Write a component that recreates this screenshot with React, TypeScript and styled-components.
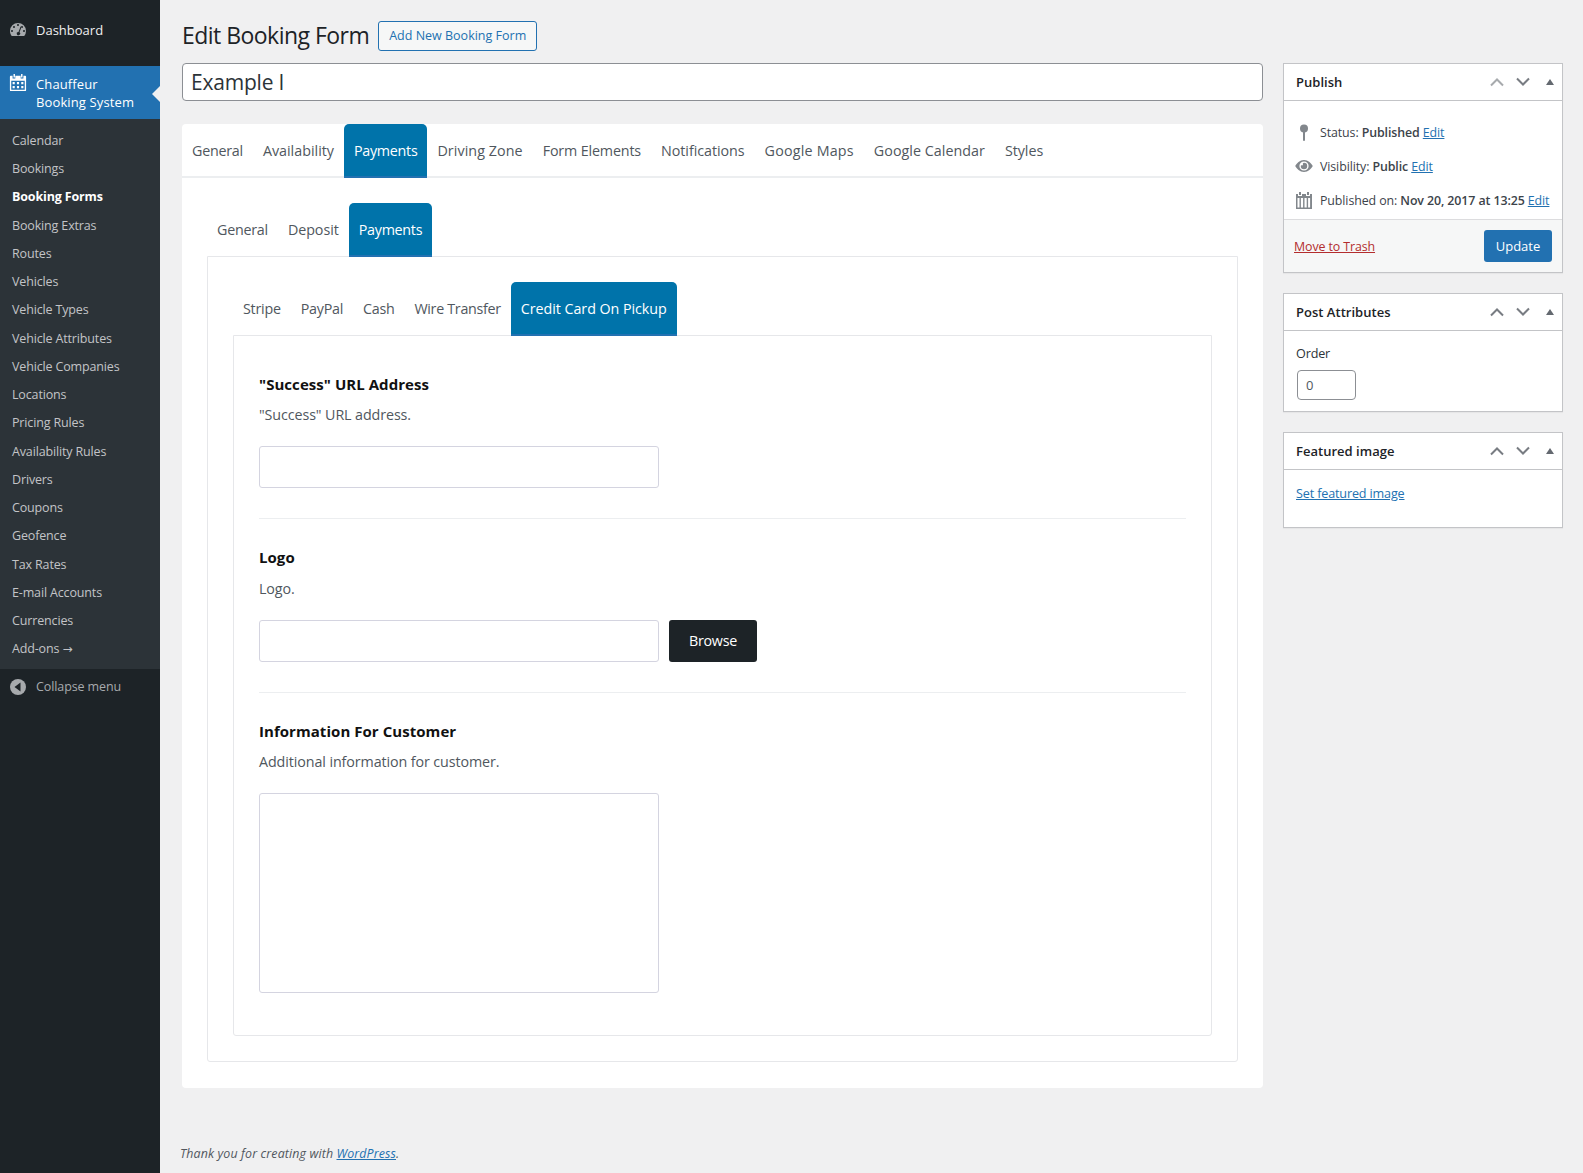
import React from "react";
import styled, { createGlobalStyle } from "styled-components";

const Global = createGlobalStyle`
  html, body { margin: 0; padding: 0; background: #f0f0f1; }
  body { font-family: "Open Sans", "Noto Sans", "Liberation Sans", sans-serif; font-size: 13px; color: #3c434a; }
  * { box-sizing: border-box; }
`;

const Page = styled.div`
  display: flex;
  height: 1173px;
  overflow: hidden;
  position: relative;
`;
const Side = styled.nav`
  width: 160px;
  flex: none;
  background: #1d2327;
  display: flex;
  flex-direction: column;
`;
const TopItem = styled.div`
  height: 66px;
  padding: 20px 0 0 8px;
  display: flex;
  gap: 8px;
  color: #f0f0f1;
  font-size: 13px;
  line-height: 20px;
  svg { flex: none; }
`;
const CurrentItem = styled.div`
  height: 53px;
  background: #2271b1;
  color: #fff;
  padding: 9px 0 0 9px;
  display: flex;
  gap: 9px;
  font-size: 13px;
  line-height: 18px;
  letter-spacing: 0.12px;
  position: relative;
  svg { flex: none; margin-top: -1px; }
  &::after {
    content: "";
    position: absolute;
    right: 0;
    top: 20px;
    border: 8px solid transparent;
    border-right-color: #f0f0f1;
    border-left-width: 0;
  }
`;
const SubMenu = styled.div`
  background: #2c3338;
  padding: 8px 0 6px;
`;
const SubItem = styled.div<{ $on?: boolean }>`
  height: 28.24px;
  padding-left: 12px;
  line-height: 28px;
  font-size: 12.5px;
  letter-spacing: -0.15px;
  color: ${(p) => (p.$on ? "#fff" : "#c3c4c7")};
  font-weight: ${(p) => (p.$on ? 700 : 400)};
  white-space: nowrap;
`;
const Arrow = styled.span`
  font-family: "DejaVu Sans", sans-serif;
  font-size: 12px;
  letter-spacing: 0;
`;
const Collapse = styled.div`
  display: flex;
  align-items: center;
  gap: 10px;
  padding: 9px 0 0 10px;
  color: #a7aaad;
  font-size: 12.5px;
  letter-spacing: -0.1px;
  line-height: 18px;
`;

const Main = styled.main`
  flex: 1;
  min-width: 0;
  padding: 0 20px 0 22px;
  position: relative;
`;
const Head = styled.div`
  display: flex;
  align-items: center;
  height: 63px;
  padding-top: 8px;
  gap: 9px;
`;
const H1 = styled.h1`
  margin: 0;
  font-size: 23px;
  font-weight: 400;
  color: #1d2327;
  letter-spacing: -0.53px;
  line-height: 29px;
`;
const AddNew = styled.a`
  border: 1px solid #2271b1;
  color: #2271b1;
  border-radius: 3px;
  font-size: 12.5px;
  height: 30px;
  line-height: 28px;
  padding: 0 10px;
  background: #f6f7f7;
`;
const Columns = styled.div`
  display: flex;
  gap: 20px;
  align-items: flex-start;
`;
const Left = styled.div`
  width: 1081px;
  flex: none;
`;
const Title = styled.div`
  height: 38px;
  border: 1px solid #8c8f94;
  border-radius: 4px;
  background: #fff;
  font-size: 21px;
  line-height: 37px;
  padding: 0 8px;
  color: #2c3338;
  letter-spacing: -0.2px;
`;
const Card = styled.section`
  margin-top: 23px;
  background: #fff;
  border-radius: 4px;
  height: 964px;
`;
const Tabs = styled.div`
  display: flex;
  height: 54px;
  border-bottom: 2px solid #eceef0;
`;
const Tab = styled.div<{ $on?: boolean; $track: number }>`
  height: 54px;
  padding: 0 10px;
  line-height: 53px;
  font-size: 14.3px;
  letter-spacing: ${(p) => p.$track}px;
  white-space: nowrap;
  color: ${(p) => (p.$on ? "#fff" : "#50575e")};
  background: ${(p) => (p.$on ? "#0073aa" : "transparent")};
  border-radius: ${(p) => (p.$on ? "5px 5px 0 0" : "0")};
  border-bottom: ${(p) => (p.$on ? "2px solid #2271b1" : "0")};
`;
const Level2 = styled.div`
  padding: 25px;
`;
const PlainTabs = styled(Tabs)`
  border-bottom: 0;
  margin-bottom: -1px;
  position: relative;
`;
const Panel = styled.div`
  border: 1px solid #e6e7ea;
  border-radius: 0 0 3px 3px;
  padding: 25px;
`;
const Inner = styled(Panel)`
  padding: 25px 25px 42px;
`;
const FieldTitle = styled.div`
  margin-top: 12.5px;
  font-size: 15px;
  font-weight: 700;
  line-height: 20px;
  letter-spacing: 0.05px;
  color: #111;
`;
const FieldDesc = styled.div`
  margin-top: 11.5px;
  font-size: 14.3px;
  line-height: 20px;
  letter-spacing: -0.1px;
  color: #50575e;
`;
const Row = styled.div`
  display: flex;
  gap: 10px;
  margin-top: 21px;
`;
const TextBox = styled.div<{ $tall?: boolean }>`
  width: 400px;
  height: ${(p) => (p.$tall ? "200px" : "42px")};
  border: 1px solid #d4d4e0;
  border-radius: 3px;
  background: #fff;
`;
const Browse = styled.button`
  height: 42px;
  width: 88px;
  border: 0;
  background: #1d2327;
  color: #fff;
  border-radius: 3px;
  font: inherit;
  font-size: 14.3px;
  letter-spacing: -0.3px;
`;
const Rule = styled.hr`
  border: 0;
  border-top: 1px solid #eceef0;
  margin: 30px 0 0;
`;
const RuleGap = styled.div`
  height: 15.5px;
`;
const Right = styled.aside`
  width: 280px;
  flex: none;
  display: flex;
  flex-direction: column;
  gap: 20px;
`;
const Box = styled.div`
  background: #fff;
  border: 1px solid #c3c4c7;
  box-shadow: 0 1px 1px rgba(0, 0, 0, 0.04);
`;
const BoxHead = styled.div`
  height: 37px;
  border-bottom: 1px solid #c3c4c7;
  display: flex;
  align-items: center;
  padding: 0 8.5px 0 12px;
  font-size: 13px;
  font-weight: 600;
  letter-spacing: 0.02px;
  color: #1d2327;
`;
const BoxTitle = styled.span`
  flex: 1;
`;
const Controls = styled.span`
  display: flex;
  gap: 10px;
  align-items: center;
  svg:last-child { margin-left: 4.5px; }
`;
const Meta = styled.div`
  padding: 14px 11px 0 11px;
`;
const MetaRow = styled.div`
  display: flex;
  align-items: center;
  height: 34px;
  font-size: 12.4px;
  letter-spacing: -0.1px;
  white-space: nowrap;
  gap: 7px;
  svg { flex: none; }
  b { font-weight: 600; }
`;
const MetaIcon = styled.span`
  width: 18px;
  height: 20px;
  display: flex;
  align-items: center;
  justify-content: center;
`;
const Lnk = styled.a`
  color: #2271b1;
  text-decoration: underline;
`;
const Major = styled.div`
  margin-top: 2px;
  height: 53px;
  border-top: 1px solid #dcdcde;
  background: #f6f7f7;
  display: flex;
  align-items: center;
  justify-content: space-between;
  padding: 0 10px;
  font-size: 12.4px;
  letter-spacing: -0.1px;
`;
const Trash = styled.a`
  color: #b32d2e;
  text-decoration: underline;
`;
const Update = styled.button`
  width: 68px;
  height: 32px;
  background: #2271b1;
  color: #fff;
  border: 0;
  border-radius: 3px;
  font: inherit;
  font-size: 13px;
`;
const BoxBody = styled.div<{ $h: number; $pt: number }>`
  height: ${(p) => p.$h}px;
  padding: ${(p) => p.$pt}px 12px 0;
  font-size: 12.6px;
  letter-spacing: -0.15px;
`;
const OrderLabel = styled.div`
  line-height: 20px;
  color: #2c3338;
`;
const OrderBox = styled.div`
  margin: 6px 0 0 1px;
  width: 59px;
  height: 30px;
  border: 1px solid #8c8f94;
  border-radius: 4px;
  padding: 0 8px;
  line-height: 28px;
  font-size: 13px;
  color: #50575e;
`;
const Foot = styled.div`
  position: absolute;
  left: 20px;
  top: 1144px;
  font-style: italic;
  font-size: 12.4px;
  letter-spacing: 0.13px;
  line-height: 20px;
  color: #50575e;
`;

const Gauge = () => (
  <svg width="20" height="20" viewBox="0 0 20 20" fill="#a7aaad">
    <path d="M3.76 16h12.48A7.97 7.97 0 0 0 18 11a8 8 0 0 0-16 0c0 1.9.66 3.64 1.76 5zM10 4a1 1 0 1 1 0 2 1 1 0 0 1 0-2zM6 6a1 1 0 1 1 0 2 1 1 0 0 1 0-2zm8 0a1 1 0 1 1 0 2 1 1 0 0 1 0-2zM4 10a1 1 0 1 1 0 2 1 1 0 0 1 0-2zm12 0a1 1 0 1 1 0 2 1 1 0 0 1 0-2zM12.6 6.6l.9.4L11.500 12.300a1.700 1.700 0 1 1-1-.4z" fillRule="evenodd" />
  </svg>
);
const Cal = ({ size = 18, color = "#fff" }: { size?: number; color?: string }) => (
  <svg width={size} height={size} viewBox="0 0 20 20" fill={color}>
    <path fillRule="evenodd" d="M5 0h1.6v4H5zM13.400 0H15v4h-1.600zM2 2h2v3h3V2h6v3h3V2h2a1 1 0 0 1 1 1v15a1 1 0 0 1-1 1H2a1 1 0 0 1-1-1V3a1 1 0 0 1 1-1zm.5 5.500v10h15v-10zM4 9h2.400v2.400H4zm4.800 0h2.400v2.400H8.800zm4.800 0H16v2.400h-2.400zM4 13.400h2.400v2.400H4zm4.800 0h2.400v2.400H8.800zm4.800 0H16v2.400h-2.400z" />
  </svg>
);
const PubCal = () => (
  <svg width="16" height="17" viewBox="0 0 16 17" fill="#82878c">
    <path fillRule="evenodd" d="M3 0h2v3H3zM11 0h2v3h-2zM0 2h2v2h4V2h4v2h4V2h2v15H0zm1.500 4v9.500h2V6zm3.400 0v9.500h2.200V6zm3.600 0v9.500h2.200V6zm3.600 0v9.500h2V6z" />
  </svg>
);
const Pin = () => (
  <svg width="10" height="17" viewBox="0 0 10 17" fill="#82878c">
    <circle cx="5" cy="4.500" r="4" />
    <rect x="4" y="6" width="2" height="11" rx="1" />
  </svg>
);
const Eye = () => (
  <svg width="18" height="12" viewBox="0 0 19 13" fill="#82878c">
    <path fillRule="evenodd" d="M9.500 0C14 0 17.500 3.500 19 6.500c-1.500 3-5 6.500-9.500 6.500S1.500 9.500 0 6.500C1.500 3.500 5 0 9.500 0zm0 1.500a5 5 0 1 0 0 10 5 5 0 0 0 0-10zM9.500 3a3.500 3.500 0 1 1-3.500 3.500c0-.7.600-1 1.200-.7.800.300 1.400-.300 1.100-1.100C8 4 8.500 3 9.500 3z" />
  </svg>
);
const Chev = ({ up, c }: { up?: boolean; c: string }) => (
  <svg width="16" height="10" viewBox="0 0 16 10" fill="none" stroke={c} strokeWidth="2">
    <path d={up ? "M2 8.500 8 2.500l6 6" : "M2 1.500l6 6 6-6"} />
  </svg>
);
const Tri = () => (
  <svg width="8" height="6" viewBox="0 0 8 6" fill="#646970">
    <path d="M0 6 4 0l4 6z" />
  </svg>
);
const Back = () => (
  <svg width="16" height="16" viewBox="0 0 16 16">
    <circle cx="8" cy="8" r="8" fill="#a7aaad" />
    <path d="M10.500 3.500v9L4.500 8z" fill="#1d2327" />
  </svg>
);

const menu = ["Calendar","Bookings","Booking Forms","Booking Extras","Routes","Vehicles","Vehicle Types","Vehicle Attributes","Vehicle Companies","Locations","Pricing Rules","Availability Rules","Drivers","Coupons","Geofence","Tax Rates","E-mail Accounts","Currencies"];
const mainTabs: [string, number][] = [["General",-0.25],["Availability",0],["Payments",-0.28],["Driving Zone",0.07],["Form Elements",-0.15],["Notifications",-0.05],["Google Maps",0.2],["Google Calendar",0.03],["Styles",-0.05]];
const midTabs: [string, number][] = [["General",-0.25],["Deposit",-0.05],["Payments",-0.28]];
const payTabs: [string, number][] = [["Stripe",-0.25],["PayPal",-0.25],["Cash",-0.3],["Wire Transfer",-0.3],["Credit Card On Pickup",-0.05]];

const Ctl = ({ dim }: { dim?: boolean }) => (
  <Controls>
    <Chev up c={dim ? "#a7aaad" : "#787c82"} />
    <Chev c="#787c82" />
    <Tri />
  </Controls>
);

export default function App() {
  return (
    <Page>
      <Global />
      <Side>
        <TopItem><Gauge />Dashboard</TopItem>
        <CurrentItem><Cal /><span>Chauffeur<br />Booking System</span></CurrentItem>
        <SubMenu>
          {menu.map((m) => <SubItem key={m} $on={m === "Booking Forms"}>{m}</SubItem>)}
          <SubItem>Add-ons <Arrow>→</Arrow></SubItem>
        </SubMenu>
        <Collapse><Back />Collapse menu</Collapse>
      </Side>
      <Main>
        <Head>
          <H1>Edit Booking Form</H1>
          <AddNew>Add New Booking Form</AddNew>
        </Head>
        <Columns>
          <Left>
            <Title>Example I</Title>
            <Card>
              <Tabs>
                {mainTabs.map(([t, k]) => <Tab key={t} $track={k} $on={t === "Payments"}>{t}</Tab>)}
              </Tabs>
              <Level2>
                <PlainTabs>
                  {midTabs.map(([t, k]) => <Tab key={t} $track={k} $on={t === "Payments"}>{t}</Tab>)}
                </PlainTabs>
                <Panel>
                  <PlainTabs>
                    {payTabs.map(([t, k]) => <Tab key={t} $track={k} $on={t === "Credit Card On Pickup"}>{t}</Tab>)}
                  </PlainTabs>
                  <Inner>
                    <FieldTitle>"Success" URL Address</FieldTitle>
                    <FieldDesc>"Success" URL address.</FieldDesc>
                    <Row><TextBox /></Row>
                    <Rule />
                    <RuleGap />
                    <FieldTitle>Logo</FieldTitle>
                    <FieldDesc>Logo.</FieldDesc>
                    <Row><TextBox /><Browse>Browse</Browse></Row>
                    <Rule />
                    <RuleGap />
                    <FieldTitle>Information For Customer</FieldTitle>
                    <FieldDesc>Additional information for customer.</FieldDesc>
                    <Row><TextBox $tall /></Row>
                  </Inner>
                </Panel>
              </Level2>
            </Card>
          </Left>
          <Right>
            <Box>
              <BoxHead><BoxTitle>Publish</BoxTitle><Ctl dim /></BoxHead>
              <Meta>
                <MetaRow><MetaIcon><Pin /></MetaIcon><span>Status: <b>Published</b> <Lnk>Edit</Lnk></span></MetaRow>
                <MetaRow><MetaIcon><Eye /></MetaIcon><span>Visibility: <b>Public</b> <Lnk>Edit</Lnk></span></MetaRow>
                <MetaRow><MetaIcon><PubCal /></MetaIcon><span>Published on: <b>Nov 20, 2017 at 13:25</b> <Lnk>Edit</Lnk></span></MetaRow>
              </Meta>
              <Major><Trash>Move to Trash</Trash><Update>Update</Update></Major>
            </Box>
            <Box>
              <BoxHead><BoxTitle>Post Attributes</BoxTitle><Ctl /></BoxHead>
              <BoxBody $h={80} $pt={13}>
                <OrderLabel>Order</OrderLabel>
                <OrderBox>0</OrderBox>
              </BoxBody>
            </Box>
            <Box>
              <BoxHead><BoxTitle>Featured image</BoxTitle><Ctl /></BoxHead>
              <BoxBody $h={57} $pt={15}>
                <Lnk>Set featured image</Lnk>
              </BoxBody>
            </Box>
          </Right>
        </Columns>
        <Foot>Thank you for creating with <Lnk>WordPress</Lnk>.</Foot>
      </Main>
    </Page>
  );
}
